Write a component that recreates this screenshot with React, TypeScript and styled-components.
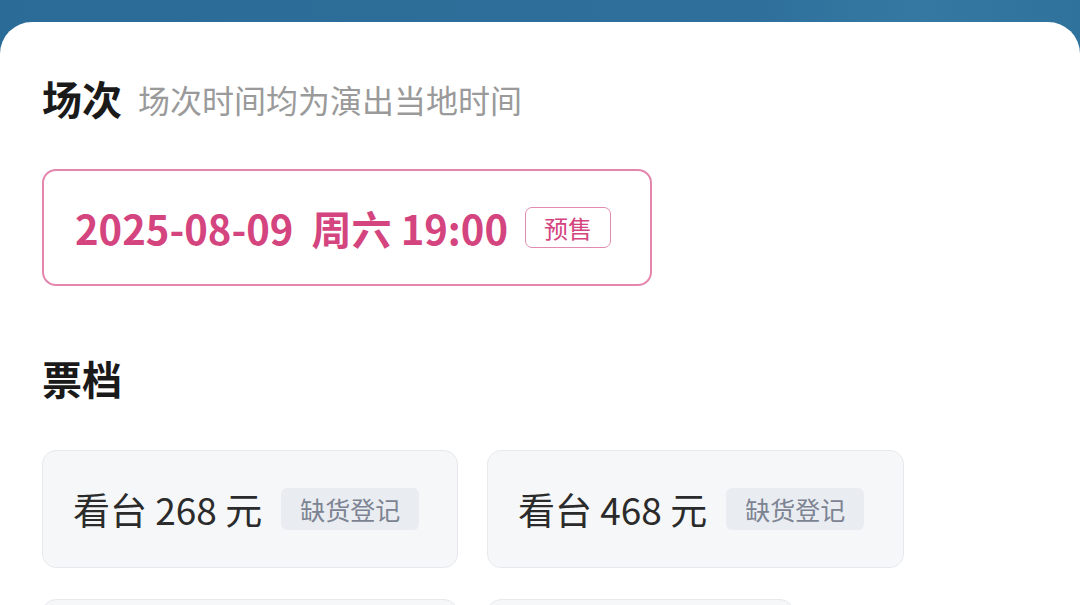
import styled, { createGlobalStyle } from "styled-components";

// Types
type Ticket = {
  label: string;
  price: string;
  width: number;
};

const tickets: Ticket[] = [
  { label: "看台", price: "268", width: 416 },
  { label: "看台", price: "468", width: 417 },
  { label: "看台", price: "668", width: 416 },
  { label: "看台", price: "88", width: 307 },
];

const App = () => {
  return (
    <Page>
      <GlobalStyle />
      <Sheet>
        <TitleRow>
          <Title>场次</Title>
          <Hint>场次时间均为演出当地时间</Hint>
        </TitleRow>

        <SessionCard>
          <SessionText>2025-08-09&nbsp;&nbsp;周六 19:00</SessionText>
          <PresaleTag>预售</PresaleTag>
        </SessionCard>

        <TicketTitle>票档</TicketTitle>

        <TicketGrid>
          {tickets.map((t, i) => (
            <TicketCard key={i} $width={t.width}>
              <TicketName>
                {t.label} {t.price} 元
              </TicketName>
              <SoldOutTag>缺货登记</SoldOutTag>
            </TicketCard>
          ))}
        </TicketGrid>
      </Sheet>
    </Page>
  );
};

// Styles
const GlobalStyle = createGlobalStyle`
  html, body {
    margin: 0;
    padding: 0;
    height: 605px;
    overflow: hidden;
    font-family: "Noto Sans CJK SC", "Noto Sans", sans-serif;
  }
`;

const Page = styled.div`
  height: 605px;
  background: linear-gradient(90deg, #2b6b97 0%, #2e709b 70%, #3579a3 85%, #2f729c 100%);
  padding-top: 22px;
  box-sizing: border-box;
  overflow: hidden;
`;

const Sheet = styled.div`
  background: #ffffff;
  border-radius: 32px 32px 0 0;
  height: 100%;
  padding: 50px 0 0 42px;
  box-sizing: border-box;
`;

const TitleRow = styled.div`
  display: flex;
  align-items: center;
  gap: 16px;
`;

const Title = styled.h2`
  margin: 0;
  font-size: 40px;
  line-height: 52px;
  font-weight: 700;
  color: #1a1a1a;
`;

const Hint = styled.span`
  font-size: 32px;
  line-height: 40px;
  color: #9a9a9a;
  font-weight: 400;
  margin-top: 2px;
`;

const SessionCard = styled.div`
  margin-top: 45px;
  width: 610px;
  height: 117px;
  box-sizing: border-box;
  border: 2px solid #e486ad;
  border-radius: 14px;
  display: flex;
  align-items: center;
  padding-left: 31px;
  gap: 17px;
`;

const SessionText = styled.span`
  font-size: 40px;
  font-weight: 600;
  color: #d4447e;
`;

const PresaleTag = styled.span`
  display: inline-flex;
  align-items: center;
  justify-content: center;
  width: 86px;
  height: 41px;
  box-sizing: border-box;
  border: 1.5px solid #e08cb0;
  border-radius: 7px;
  font-size: 24px;
  color: #d4447e;
`;

const TicketTitle = styled(Title)`
  margin-top: 66px;
`;

const TicketGrid = styled.div`
  margin-top: 46px;
  display: flex;
  flex-wrap: wrap;
  gap: 31px 29px;
  width: 880px;
`;

const TicketCard = styled.div<{ $width: number }>`
  width: ${(p) => p.$width}px;
  height: 118px;
  box-sizing: border-box;
  background: #f6f7f9;
  border: 1px solid #e7e9ed;
  border-radius: 14px;
  display: flex;
  align-items: center;
  padding-left: 30px;
  gap: 19px;
`;

const TicketName = styled.span`
  font-size: 37px;
  color: #2b2b2b;
  font-weight: 400;
`;

const SoldOutTag = styled.span`
  display: inline-flex;
  align-items: center;
  justify-content: center;
  width: 138px;
  height: 42px;
  background: #e9ecf0;
  border-radius: 6px;
  font-size: 25px;
  color: #7c8392;
`;

// Exports
export default App;
